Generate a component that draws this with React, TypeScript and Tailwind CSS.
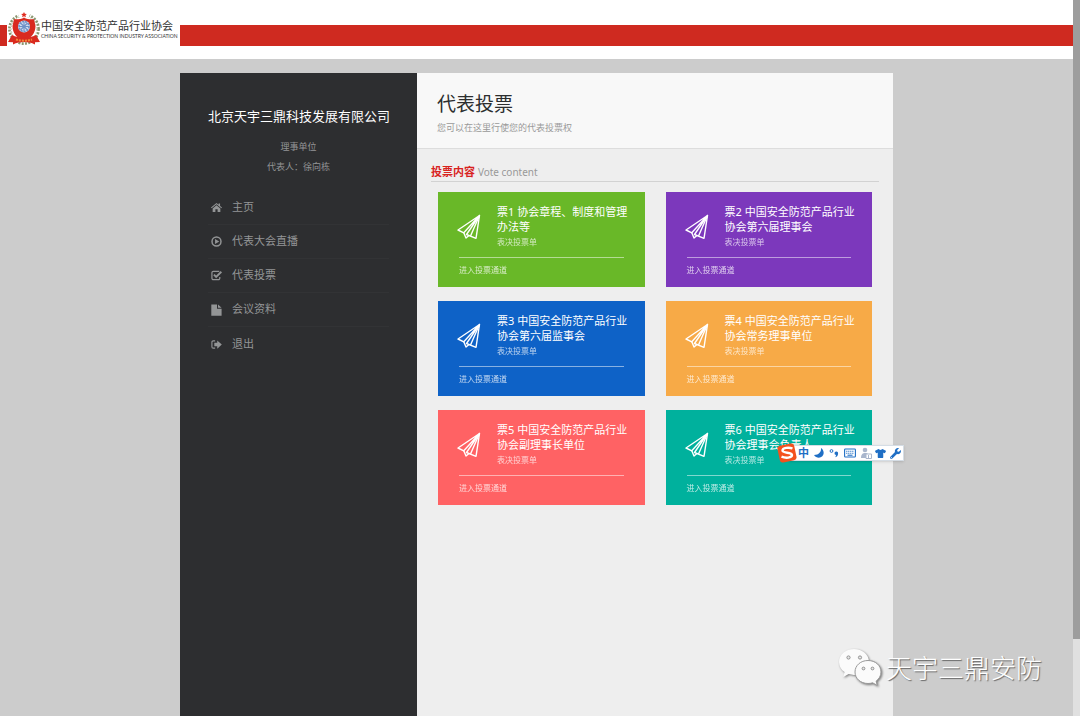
import { FaTshirt, FaWrench } from "react-icons/fa";
import type { ReactNode } from "react";

const menu: { label: string; icon: ReactNode }[] = [
  {
    label: "主页",
    icon: (
      <svg viewBox="0 0 12 12" className="size-[11px]" fill="currentColor">
        <path d="M6 3.500 10.200 7v3.800H7.200V7.800H4.800v3H1.800V7z" />
        <path d="M6 1 8.300 2.900V1.600h1.600v2.700L12 6l-.7.9L6 2.500.7 6.900 0 6z" />
      </svg>
    ),
  },
  {
    label: "代表大会直播",
    icon: (
      <svg viewBox="0 0 12 12" className="size-[11px]">
        <circle cx="6" cy="6" r="4.9" fill="none" stroke="currentColor" strokeWidth="1.6" />
        <path d="M4.4 3.3 9 6 4.4 8.7z" fill="currentColor" />
      </svg>
    ),
  },
  {
    label: "代表投票",
    icon: (
      <svg viewBox="0 0 12 12" className="size-[11px]">
        <path d="M9 1.5H2.6A1.5 1.5 0 0 0 1 3v6a1.5 1.5 0 0 0 1.6 1.5H8A1.5 1.5 0 0 0 9.6 9V7.5" fill="none" stroke="currentColor" strokeWidth="1.3" />
        <path d="m3.2 5 2.4 2.5L11.300 1.900" fill="none" stroke="currentColor" strokeWidth="2" />
      </svg>
    ),
  },
  {
    label: "会议资料",
    icon: (
      <svg viewBox="0 0 11 12" className="h-3 w-[11px]" fill="currentColor">
        <path d="M0.3 0.5H6v4.2h4.6v7H0.3z" />
        <path d="M7 0.5 10.6 3.8H7z" />
      </svg>
    ),
  },
  {
    label: "退出",
    icon: (
      <svg viewBox="0 0 12 12" className="size-[11px]">
        <path d="M4.5 2H2.4A1.4 1.4 0 0 0 1 3.4v5.2A1.4 1.4 0 0 0 2.4 10h2.1" fill="none" stroke="currentColor" strokeWidth="1.2" />
        <path d="M3.6 4.2h3.2V1.5L11.8 6l-5 4.5V7.8H3.6z" fill="currentColor" />
      </svg>
    ),
  },
];

const votes = [
  { title: "票1 协会章程、制度和管理办法等", color: "bg-[#69b828]" },
  { title: "票2 中国安全防范产品行业协会第六届理事会", color: "bg-[#7c38bc]" },
  { title: "票3 中国安全防范产品行业协会第六届监事会", color: "bg-[#0e62c7]" },
  { title: "票4 中国安全防范产品行业协会常务理事单位", color: "bg-[#f7aa47]" },
  { title: "票5 中国安全防范产品行业协会副理事长单位", color: "bg-[#ff6264]" },
  { title: "票6 中国安全防范产品行业协会理事会负责人", color: "bg-[#00b19d]" },
];

function Emblem() {
  return (
    <svg viewBox="0 0 34 34" className="size-[34px] shrink-0">
      <circle cx="17" cy="17" r="14.6" fill="none" stroke="#8b9670" strokeWidth="2.6" strokeDasharray="2 1.3" />
      <circle cx="17" cy="17" r="12.8" fill="none" stroke="#b9bf9c" strokeWidth="1" strokeDasharray="1.5 1.5" />
      <path d="M10 0h14l-2 5H12z" fill="#fff" />
      <path d="m17 0 .9 1.8 2 .2-1.5 1.3.5 2-1.9-1-1.9 1 .5-2L14.1 2l2-.2z" fill="#e02b20" />
      <path d="M17 5.500c3 1.800 6 2 10 1.800L28.500 14c0 7-4 12-11.500 14.500C9.500 26 5.500 21 5.500 14L7 7.300C11 7.500 14 7.300 17 5.500z" fill="#d92a1f" />
      <circle cx="17" cy="14.500" r="6" fill="#cfdcee" />
      <circle cx="17" cy="14.500" r="5" fill="none" stroke="#6f92c8" strokeWidth="1.6" strokeDasharray="2 1" />
      <path d="M17 9.500v10M12 14.500h10m-8.500-3.500 7 7m0-7-7 7" stroke="#6f92c8" strokeWidth="1.1" />
      <path d="M5 23c7 3.500 17 3.500 24 0l4 7-5 .2v2.300c-7-3.200-15-3.200-22 0v-2.300L1 30z" fill="#d92a1f" />
      <path d="M9 27.500c5 1.600 11 1.600 16 0" fill="none" stroke="#f08a3a" strokeWidth="2" strokeDasharray="2 1" />
    </svg>
  );
}

function PaperPlane() {
  return (
    <svg viewBox="0 0 24 26" className="h-[26px] w-6 shrink-0" fill="none" stroke="#fff" strokeWidth="1.4" strokeLinejoin="round">
      <path d="M22.500 1.500 1 16l5.800 2.800L22.500 1.500 9.500 20.500 19 24.300z" />
      <path d="M6.800 18.800 9 24l3-2.500M22.500 1.500 13.500 22" />
    </svg>
  );
}

function WeChat() {
  return (
    <svg viewBox="0 0 44 40" className="h-10 w-11 shrink-0 drop-shadow-[1px_1px_1px_#777]">
      <path d="M16 1C7.500 1 1 6.800 1 14c0 4.200 2.200 7.800 5.600 10.100L5.200 29l5.500-2.900c1.700.5 3.400.8 5.300.8 8.500 0 15-5.800 15-13S24.500 1 16 1z" fill="#fbfbfb" />
      <path d="M30 12.500c-7.400 0-13 5-13 11.500s5.600 11.500 13 11.500c1.600 0 3.200-.2 4.600-.7l4.700 2.600-1.200-4.200C41 31 43 27.800 43 24c0-6.500-5.600-11.500-13-11.500z" fill="#fbfbfb" stroke="#999" strokeWidth="1" />
      <g fill="#e7e7e7" stroke="#888" strokeWidth=".9">
        <circle cx="10.500" cy="9.500" r="1.600" />
        <circle cx="22" cy="9.500" r="1.600" />
        <circle cx="25.500" cy="20.500" r="1.400" />
        <circle cx="34.500" cy="20.500" r="1.400" />
      </g>
    </svg>
  );
}

function InputToolbar() {
  return (
    <div className="absolute top-[441px] left-[calc(50%+237px)] flex h-6 items-center">
      <svg viewBox="0 0 20 20" className="z-10 size-5 shrink-0">
        <rect x="1.500" y="1.500" width="17" height="17" rx="3" fill="#f4511e" transform="rotate(-12 10 10)" />
        <path d="M15.500 5.500C12 4 5.500 4.700 5.500 7.500c0 3 9.500 1.500 9.500 4.600 0 2.900-6.500 3.300-10.500 1.600" fill="none" stroke="#fff" strokeWidth="2.4" />
      </svg>
      <div className="-ml-2 flex h-4 w-[115px] items-center justify-between border border-[#d5dde5] bg-white pr-0.5 pl-2 text-[#1f6fc5] shadow-sm">
        <span className="text-[11px] leading-3 font-bold">中</span>
        <svg viewBox="0 0 12 12" className="size-3" fill="currentColor">
          <path d="M8 1c.6 3.500-2 7-7 7 2 3 6 3.500 8.300 1.300C11.600 7 11 3 8 1z" />
        </svg>
        <svg viewBox="0 0 12 12" className="size-3">
          <circle cx="3.500" cy="4" r="1.4" fill="none" stroke="currentColor" />
          <path d="M8.500 4.500a1.600 1.600 0 0 1 1.600 1.700C10.100 8.500 9 9.800 7.300 10.300l.8-2.200a1.700 1.700 0 0 1 .4-3.600z" fill="currentColor" />
        </svg>
        <svg viewBox="0 0 12 12" className="size-3" fill="none" stroke="currentColor" strokeWidth="1.100">
          <rect x=".6" y="2" width="10.800" height="8" rx=".8" />
          <path d="M2.200 4.300h7.600M2.200 6.200h7.600" strokeDasharray="1.200 .8" />
          <path d="M3.500 8.200h5" />
        </svg>
        <svg viewBox="0 0 12 12" className="size-3 text-[#a9b6cd]">
          <circle cx="5" cy="3" r="2.3" fill="currentColor" />
          <path d="M1 11c0-4 2-5 4-5s3 .5 3.500 2v3z" fill="currentColor" />
          <path d="M6 7h5.500v4.500H6z" fill="#fff" stroke="currentColor" />
          <path d="M8.500 8v3" stroke="currentColor" />
        </svg>
        <FaTshirt className="size-[11px]" />
        <FaWrench className="size-[11px]" />
      </div>
    </div>
  );
}

export default function App() {
  return (
    <div className="relative flex h-screen overflow-hidden bg-[#cccccc] font-['Noto_Sans','Noto_Sans_CJK_SC',sans-serif] text-[11px]">
      <div className="flex min-w-0 flex-1 flex-col">
        <header className="grid h-[59px] shrink-0 items-start bg-white">
          <div className="col-start-1 row-start-1 mt-[25px] h-[21px] bg-[#cf2a20]" />
          <a href="#home" className="col-start-1 row-start-1 mt-3 ml-[7px] flex h-[34px] items-center justify-self-start bg-white pr-0.5">
            <Emblem />
            <span className="flex flex-col whitespace-nowrap text-[#333]">
              <span className="text-[11px] leading-[13px]">中国安全防范产品行业协会</span>
              <span className="font-['Lato',sans-serif] text-[5px] leading-[8px]">CHINA SECURITY &amp; PROTECTION INDUSTRY ASSOCIATION</span>
            </span>
          </a>
        </header>
        <div className="mx-auto mt-3.5 flex w-full max-w-[713px] flex-1">
          <aside className="w-[237px] shrink-0 bg-[#2d2e30] px-7 pt-8 text-[#939596]">
            <h1 className="text-center text-[13px] leading-[22px] whitespace-nowrap text-white">北京天宇三鼎科技发展有限公司</h1>
            <p className="mt-2.5 text-center text-[9px] leading-5">理事单位</p>
            <p className="text-center text-[9px] leading-5">代表人：徐向栋</p>
            <nav className="mt-3.5">
              {menu.map((item) => (
                <a key={item.label} href={"#" + item.label} className="flex h-[34px] items-center gap-2.5 border-b border-[#323335] pl-[3px] last:border-b-0">
                  {item.icon}
                  {item.label}
                </a>
              ))}
            </nav>
          </aside>
          <main className="min-w-0 flex-1 bg-[#eeeeee]">
            <div className="h-[76px] border-b border-[#dddddd] bg-[#f8f8f8] px-5 pt-[17px]">
              <h2 className="text-[19px] leading-7 text-[#2c2e2f]">代表投票</h2>
              <p className="mt-1 text-[9px] leading-3 text-[#999]">您可以在这里行使您的代表投票权</p>
            </div>
            <div className="mx-3.5 mt-3.5 border-b border-[#d2d2d2] text-[11px] leading-[17px] text-[#999]">
              <b className="text-[#d8231f]">投票内容</b> <span className="text-[10px]">Vote content</span>
            </div>
            <div className="grid grid-cols-2 gap-x-[21px] gap-y-3.5 px-[21px] pt-2.5">
              {votes.map((vote) => (
                <section key={vote.title} className={"h-[95px] px-[21px] pt-3 text-white " + vote.color}>
                  <div className="-mr-3 flex">
                    <div className="-ml-0.5 w-10 shrink-0 pt-2.5">
                      <PaperPlane />
                    </div>
                    <div>
                      <h3 className="text-[11px] leading-[15px]">{vote.title}</h3>
                      <p className="text-[8px] leading-4 opacity-70">表决投票单</p>
                    </div>
                  </div>
                  <div className="mt-[7px] border-t border-white/50 pt-1 text-[8px] leading-4">
                    <a href="#vote" className="opacity-75">进入投票通道</a>
                  </div>
                </section>
              ))}
            </div>
          </main>
        </div>
      </div>
      <div className="w-[7px] shrink-0 bg-[#e0e0e0]">
        <div className="h-[639px] bg-[#9d9d9d]" />
      </div>
      <InputToolbar />
      <div className="absolute right-9 bottom-7 flex items-center gap-1">
        <WeChat />
        <span className="pr-0.5 text-[26px] leading-10 font-light text-white [text-shadow:1px_1px_1px_#666]">天宇三鼎安防</span>
      </div>
    </div>
  );
}
